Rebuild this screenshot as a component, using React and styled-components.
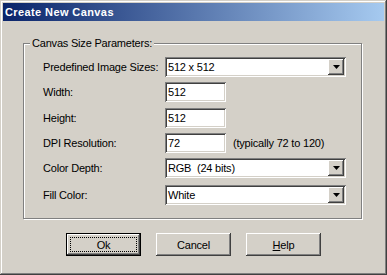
import React from 'react';
import styled, { createGlobalStyle, css } from 'styled-components';

const GlobalStyle = createGlobalStyle`
    body {
        margin: 0;
        background: #d4d0c8;
        font-family: "Liberation Sans", Arial, sans-serif;
        font-size: 11px;
        letter-spacing: -0.2px;
        color: #000;
    }
`;

const raised = css`
    box-shadow: inset -1px -1px #404040, inset 1px 1px #ffffff,
        inset -2px -2px #808080, inset 2px 2px #d4d0c8;
`;

const sunken = css`
    box-shadow: inset 1px 1px #808080, inset -1px -1px #ffffff,
        inset 2px 2px #404040, inset -2px -2px #d4d0c8;
`;

const Window = styled.div`
    width: 387px;
    height: 275px;
    box-sizing: border-box;
    padding: 3px;
    background: #d4d0c8;
    display: flex;
    flex-direction: column;
    box-shadow: inset -1px -1px #404040, inset 1px 1px #d4d0c8,
        inset -2px -2px #808080, inset 2px 2px #ffffff;
`;

const TitleBar = styled.div`
    height: 18px;
    display: flex;
    align-items: center;
    padding-left: 2px;
    background: linear-gradient(to right, #0a246a, #a6caf0);
    color: #fff;
    font-weight: bold;
    font-size: 11px;
    letter-spacing: 0.4px;
`;

const Body = styled.div`
    flex: 1;
    padding: 16px 0 0 20px;
`;

const Group = styled.fieldset`
    width: 339px;
    box-sizing: border-box;
    margin: 0;
    padding: 0;
    border: 1px solid #808080;
    box-shadow: inset 1px 1px #fff, 1px 1px #fff;
`;

const Legend = styled.legend`
    margin-left: 6px;
    padding: 0 2px;
    background: #d4d0c8;
    line-height: 13px;
`;

const Rows = styled.div`
    padding: 7px 0 13px 19px;
`;

const Row = styled.div`
    display: flex;
    align-items: center;
    height: 20px;
    margin-top: ${(p) => p.$gap || 0}px;
`;

const Label = styled.span`
    width: 122px;
`;

const Edit = styled.div`
    width: 61px;
    height: 20px;
    box-sizing: border-box;
    padding-left: 3px;
    display: flex;
    align-items: center;
    background: #fff;
    ${sunken}
`;

const Hint = styled.span`
    margin-left: 7px;
`;

const Combo = styled.div`
    width: 181px;
    height: 20px;
    box-sizing: border-box;
    padding: 2px 2px 2px 3px;
    display: flex;
    align-items: center;
    background: #fff;
    ${sunken}

    span {
        flex: 1;
        white-space: pre;
    }
`;

const DropButton = styled.div`
    width: 16px;
    height: 16px;
    display: flex;
    align-items: center;
    justify-content: center;
    background: #d4d0c8;
    ${raised}
`;

const Buttons = styled.div`
    display: flex;
    justify-content: center;
    gap: 15px;
    margin-top: 14px;
    margin-left: -20px;
`;

const Button = styled.div`
    width: 75px;
    height: 23px;
    box-sizing: border-box;
    display: flex;
    align-items: center;
    justify-content: center;
    background: #d4d0c8;
    position: relative;
    ${raised}
    ${(p) =>
        p.$default &&
        css`
            box-shadow: inset 0 0 0 1px #000, inset -2px -2px #404040,
                inset 2px 2px #ffffff, inset -3px -3px #808080,
                inset 3px 3px #d4d0c8;
        `}
`;

const Focus = styled.span`
    position: absolute;
    inset: 4px;
    border: 1px dotted #000;
`;

const Combobox = ({ value }) => (
    <Combo>
        <span>{value}</span>
        <DropButton>
            <svg width="7" height="4" viewBox="0 0 7 4">
                <path d="M0 0h7L3.5 4z" fill="#000" />
            </svg>
        </DropButton>
    </Combo>
);

const App = () => (
    <>
        <GlobalStyle />
        <Window>
            <TitleBar>Create New Canvas</TitleBar>
            <Body>
                <Group>
                    <Legend>Canvas Size Parameters:</Legend>
                    <Rows>
                        <Row>
                            <Label>Predefined Image Sizes:</Label>
                            <Combobox value="512 x 512" />
                        </Row>
                        <Row $gap={5}>
                            <Label>Width:</Label>
                            <Edit>512</Edit>
                        </Row>
                        <Row $gap={6}>
                            <Label>Height:</Label>
                            <Edit>512</Edit>
                        </Row>
                        <Row $gap={5}>
                            <Label>DPI Resolution:</Label>
                            <Edit>72</Edit>
                            <Hint>(typically 72 to 120)</Hint>
                        </Row>
                        <Row $gap={5}>
                            <Label>Color Depth:</Label>
                            <Combobox value="RGB  (24 bits)" />
                        </Row>
                        <Row $gap={7}>
                            <Label>Fill Color:</Label>
                            <Combobox value="White" />
                        </Row>
                    </Rows>
                </Group>
                <Buttons>
                    <Button $default>
                        <Focus />
                        Ok
                    </Button>
                    <Button>Cancel</Button>
                    <Button>
                        <span>
                            <u>H</u>elp
                        </span>
                    </Button>
                </Buttons>
            </Body>
        </Window>
    </>
);

export default App;
